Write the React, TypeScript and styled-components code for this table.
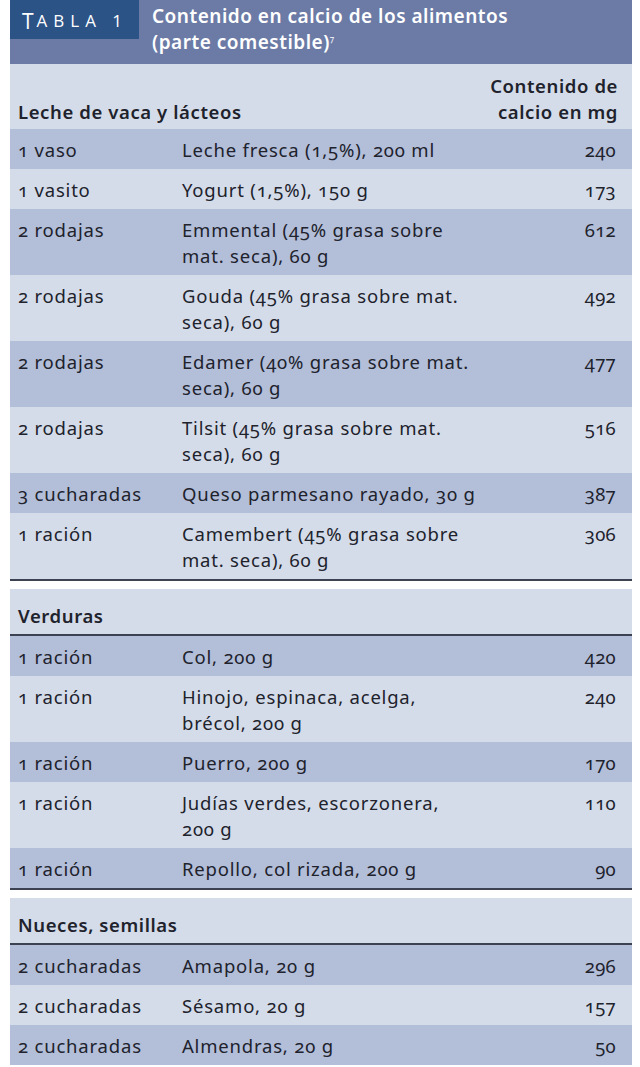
import React from 'react';
import styled, { createGlobalStyle } from 'styled-components';

const GlobalStyle = createGlobalStyle`
  html, body {
    margin: 0;
    padding: 0;
    background: #ffffff;
  }
  body {
    font-family: 'Noto Sans', 'Open Sans', 'Liberation Sans', sans-serif;
    color: #20222c;
  }
`;

const Page = styled.div`
  width: 640px;
  padding: 0 8px 0 10px;
  box-sizing: border-box;
`;

const TableBox = styled.div`
  width: 622px;
  display: flex;
  flex-direction: column;
  font-size: 18.5px;
  letter-spacing: 0.8px;
  line-height: 26px;
  font-feature-settings: 'onum' 1;
`;

const TitleBar = styled.div`
  height: 64px;
  background: #6b7ba6;
  display: flex;
  align-items: flex-start;
`;

const TableLabel = styled.div`
  width: 129px;
  height: 39px;
  background: #2c5386;
  color: #ffffff;
  display: flex;
  align-items: center;
  padding: 2px 0 0 12px;
  box-sizing: border-box;
  font-family: 'Open Sans', 'Liberation Sans', sans-serif;
  font-size: 17px;
  letter-spacing: 6px;
  text-transform: uppercase;
  font-feature-settings: normal;
`;

const BigLetter = styled.span`
  font-size: 21px;
  letter-spacing: 3px;
`;

const Title = styled.div`
  padding: 3px 0 0 13px;
  color: #ffffff;
  font-weight: 600;
  font-size: 19px;
  letter-spacing: 0.5px;
  line-height: 26px;
`;

const Sup = styled.sup`
  font-size: 8px;
  line-height: 0;
  font-weight: 400;
`;

const ColumnHead = styled.div`
  background: #d5dce9;
  display: flex;
  justify-content: space-between;
  align-items: flex-end;
  padding: 9px 14px 4px 8px;
  font-weight: 600;
  letter-spacing: 0.6px;
`;

const HeadRight = styled.div`
  text-align: right;
`;

const SectionGap = styled.div`
  height: 8px;
  background: #ffffff;
  border-top: 2px solid #3c4252;
`;

const SectionHead = styled.div`
  background: #d5dce9;
  padding: 14px 8px 5px;
  font-weight: 600;
  letter-spacing: 0.6px;
  border-bottom: 2px solid #3c4252;
`;

const Row = styled.div<{ $dark: boolean }>`
  display: grid;
  grid-template-columns: 164px 1fr 60px;
  padding: 8px 16px 6px 8px;
  background: ${(p) => (p.$dark ? '#b3bed9' : '#d5dce9')};
`;

const Amount = styled.div`
  white-space: nowrap;
`;

const Food = styled.div`
  white-space: nowrap;
`;

const Value = styled.div`
  text-align: right;
  letter-spacing: 0.3px;
`;

type Item = [string, string[], number];

const sections: { title?: string; items: Item[] }[] = [
  {
    items: [
      ['1 vaso', ['Leche fresca (1,5%), 200 ml'], 240],
      ['1 vasito', ['Yogurt (1,5%), 150 g'], 173],
      ['2 rodajas', ['Emmental (45% grasa sobre', 'mat. seca), 60 g'], 612],
      ['2 rodajas', ['Gouda (45% grasa sobre mat.', 'seca), 60 g'], 492],
      ['2 rodajas', ['Edamer (40% grasa sobre mat.', 'seca), 60 g'], 477],
      ['2 rodajas', ['Tilsit (45% grasa sobre mat.', 'seca), 60 g'], 516],
      ['3 cucharadas', ['Queso parmesano rayado, 30 g'], 387],
      ['1 ración', ['Camembert (45% grasa sobre', 'mat. seca), 60 g'], 306],
    ],
  },
  {
    title: 'Verduras',
    items: [
      ['1 ración', ['Col, 200 g'], 420],
      ['1 ración', ['Hinojo, espinaca, acelga,', 'brécol, 200 g'], 240],
      ['1 ración', ['Puerro, 200 g'], 170],
      ['1 ración', ['Judías verdes, escorzonera,', '200 g'], 110],
      ['1 ración', ['Repollo, col rizada, 200 g'], 90],
    ],
  },
  {
    title: 'Nueces, semillas',
    items: [
      ['2 cucharadas', ['Amapola, 20 g'], 296],
      ['2 cucharadas', ['Sésamo, 20 g'], 157],
      ['2 cucharadas', ['Almendras, 20 g'], 50],
    ],
  },
];

export default function App() {
  return (
    <>
      <GlobalStyle />
      <Page>
        <TableBox>
          <TitleBar>
            <TableLabel>
              <BigLetter>T</BigLetter>abla 1
            </TableLabel>
            <Title>
              Contenido en calcio de los alimentos
              <br />
              (parte comestible)<Sup>7</Sup>
            </Title>
          </TitleBar>
          {sections.map((section, si) => (
            <React.Fragment key={si}>
              {si === 0 ? (
                <ColumnHead>
                  <div>Leche de vaca y lácteos</div>
                  <HeadRight>
                    Contenido de
                    <br />
                    calcio en mg
                  </HeadRight>
                </ColumnHead>
              ) : (
                <>
                  <SectionGap />
                  <SectionHead>{section.title}</SectionHead>
                </>
              )}
              {section.items.map(([amount, food, value], i) => (
                <Row key={i} $dark={i % 2 === 0}>
                  <Amount>{amount}</Amount>
                  <Food>
                    {food.map((line, li) => (
                      <div key={li}>{line}</div>
                    ))}
                  </Food>
                  <Value>{value}</Value>
                </Row>
              ))}
            </React.Fragment>
          ))}
        </TableBox>
      </Page>
    </>
  );
}
